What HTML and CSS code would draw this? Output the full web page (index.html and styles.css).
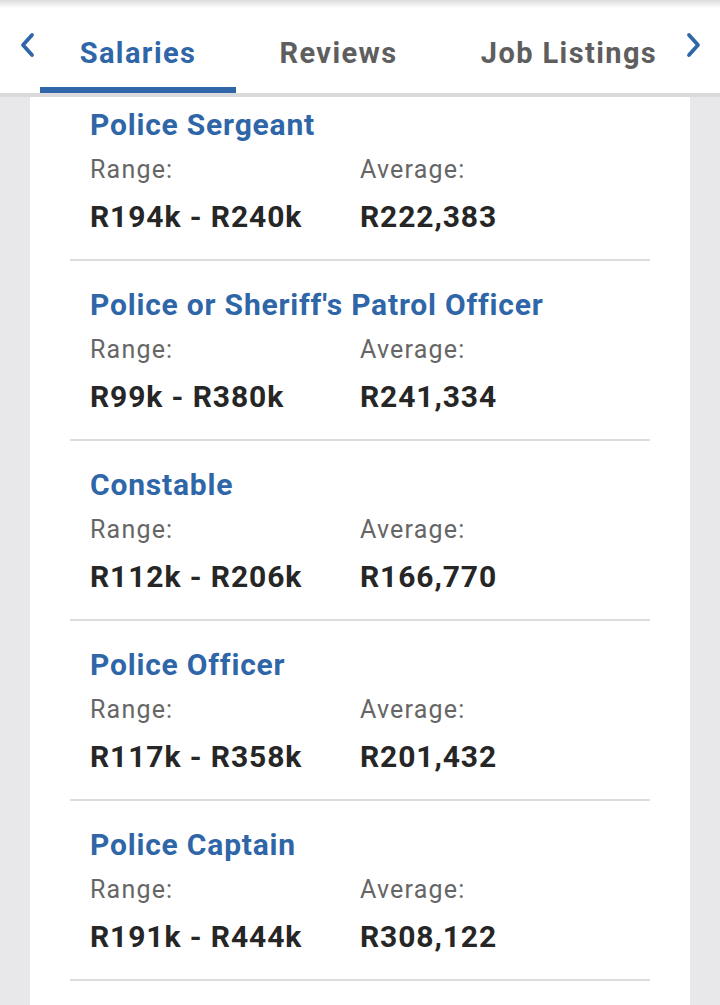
FILE: index.html
```html
<!DOCTYPE html>
<html lang="en">
<head>
    <meta charset="UTF-8">
    <meta name="viewport" content="width=device-width, initial-scale=1.0">
    <title>Salaries</title>
    <link rel="stylesheet" href="styles.css">
</head>
<body>

    <!-- Tab bar -->
    <div class="tab-bar">
        <span class="chevron">
            <svg width="18" height="28" viewBox="0 0 18 28"><path d="M14 4 L5 14 L14 24" fill="none" stroke="#2f66a8" stroke-width="3.8" stroke-linecap="round" stroke-linejoin="round"/></svg>
        </span>
        <div class="tabs">
            <a class="tab active" href="#">Salaries</a>
            <a class="tab" href="#">Reviews</a>
            <a class="tab" href="#">Job Listings</a>
        </div>
        <span class="chevron">
            <svg width="18" height="28" viewBox="0 0 18 28"><path d="M4 4 L13 14 L4 24" fill="none" stroke="#2f66a8" stroke-width="3.8" stroke-linecap="round" stroke-linejoin="round"/></svg>
        </span>
    </div>

    <!-- Salary list (scrolled a little under the tab bar) -->
    <div class="page">
        <div class="card">
            <div class="item">
                <h3 class="job">Police Sergeant</h3>
                <div class="cols">
                    <div><p class="label">Range:</p><p class="value">R194k - R240k</p></div>
                    <div><p class="label">Average:</p><p class="value">R222,383</p></div>
                </div>
            </div>
            <div class="item">
                <h3 class="job">Police or Sheriff's Patrol Officer</h3>
                <div class="cols">
                    <div><p class="label">Range:</p><p class="value">R99k - R380k</p></div>
                    <div><p class="label">Average:</p><p class="value">R241,334</p></div>
                </div>
            </div>
            <div class="item">
                <h3 class="job">Constable</h3>
                <div class="cols">
                    <div><p class="label">Range:</p><p class="value">R112k - R206k</p></div>
                    <div><p class="label">Average:</p><p class="value">R166,770</p></div>
                </div>
            </div>
            <div class="item">
                <h3 class="job">Police Officer</h3>
                <div class="cols">
                    <div><p class="label">Range:</p><p class="value">R117k - R358k</p></div>
                    <div><p class="label">Average:</p><p class="value">R201,432</p></div>
                </div>
            </div>
            <div class="item">
                <h3 class="job">Police Captain</h3>
                <div class="cols">
                    <div><p class="label">Range:</p><p class="value">R191k - R444k</p></div>
                    <div><p class="label">Average:</p><p class="value">R308,122</p></div>
                </div>
            </div>
        </div>
    </div>

</body>
</html>
```

FILE: styles.css
```css
/* Reset */
* {
    margin: 0;
    padding: 0;
    box-sizing: border-box;
    font-family: Roboto, "Liberation Sans", Arial, sans-serif;
}

body {
    background-color: #e8e8ea;
    height: 1005px;
    overflow: hidden;
}

/* Tab bar */
.tab-bar {
    position: relative;
    z-index: 2;
    display: flex;
    align-items: center;
    height: 97px;
    background: linear-gradient(#dcdcdc, #ffffff 8px);
    border-bottom: 4px solid #dadadd;
    padding: 0 20px 0 18px;
}

.chevron {
    display: flex;
    align-items: center;
    margin-top: -4px;
}

.tabs {
    display: flex;
    flex-grow: 1;
    align-self: stretch;
    margin-left: 4px;
}

.tab {
    display: flex;
    align-items: center;
    justify-content: center;
    padding-top: 18px;
    font-size: 29px;
    font-weight: bold;
    letter-spacing: 1.4px;
    color: #5e5e5e;
    text-decoration: none;
    border-bottom: 6px solid transparent;
}

.tab:nth-child(1) {
    width: 196px;
}

.tab:nth-child(2) {
    width: 205px;
}

.tab:nth-child(3) {
    width: 244px;
    padding-left: 12px;
}

.tab.active {
    color: #2f66a8;
    border-bottom-color: #2f66a8;
}

/* Salary list */
.page {
    margin-top: -16px;
    padding: 0 30px;
}

.card {
    background-color: #fff;
    padding: 0 40px 60px;
}

.item {
    padding: 24px 20px 0;
    height: 180px;
    border-bottom: 2px solid #dcdcdc;
}

.job {
    font-size: 30px;
    font-weight: bold;
    letter-spacing: 0.8px;
    color: #2f66a8;
    line-height: 40px;
}

.cols {
    display: grid;
    grid-template-columns: 270px 1fr;
}

.label {
    font-size: 25px;
    color: #666;
    letter-spacing: 1.2px;
    line-height: 30px;
    margin-top: 10px;
}

.value {
    font-size: 30px;
    font-weight: bold;
    color: #262626;
    letter-spacing: 0.9px;
    line-height: 40px;
    margin-top: 12px;
}
```
